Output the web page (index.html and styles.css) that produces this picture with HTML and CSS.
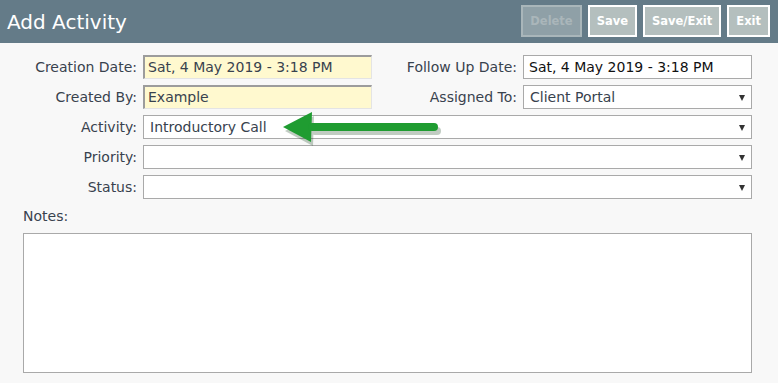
FILE: index.html
```html
<!DOCTYPE html>
<html lang="en">
<head>
    <meta charset="UTF-8">
    <title>Add Activity</title>
    <link rel="stylesheet" href="styles.css">
</head>
<body>
    <div class="page">
        <div class="header">
            <h1>Add Activity</h1>
            <div class="actions">
                <span class="btn disabled">Delete</span>
                <span class="btn">Save</span>
                <span class="btn">Save/Exit</span>
                <span class="btn">Exit</span>
            </div>
        </div>
        <div class="form">
            <label>Creation Date:</label>
            <div class="field readonly">Sat, 4 May 2019 - 3:18 PM</div>
            <label>Follow Up Date:</label>
            <div class="field dark">Sat, 4 May 2019 - 3:18 PM</div>

            <label>Created By:</label>
            <div class="field readonly">Example</div>
            <label>Assigned To:</label>
            <div class="field select">Client Portal</div>

            <label>Activity:</label>
            <div class="field select wide">Introductory Call</div>

            <label>Priority:</label>
            <div class="field select wide"></div>

            <label>Status:</label>
            <div class="field select wide"></div>
        </div>
        <div class="notes">
            <div class="notes-label">Notes:</div>
            <div class="notes-box"></div>
        </div>
        <svg class="pointer" width="170" height="44" viewBox="0 0 170 44">
            <!-- callout arrow -->
            <g transform="translate(1 3)" fill="#0b3a12" opacity="0.25">
                <polygon points="2,17 31,2 30,32"/>
                <rect x="28" y="13" width="130" height="8" rx="4"/>
            </g>
            <g fill="#1f9c31">
                <polygon points="1,16 30,1 29,31"/>
                <rect x="26" y="12" width="130" height="8" rx="4"/>
            </g>
        </svg>
    </div>
</body>
</html>
```

FILE: styles.css
```css
* {
    box-sizing: border-box;
}
body {
    margin: 0;
    background: #f8f8f8;
    font-family: "DejaVu Sans", Verdana, sans-serif;
    color: #38424e;
}
.page {
    position: relative;
    width: 778px;
    height: 383px;
    overflow: hidden;
}
.header {
    display: flex;
    align-items: center;
    justify-content: space-between;
    height: 43px;
    padding: 0 8px 0 7px;
    background: #647b88;
}
.header h1 {
    margin: 0;
    font-size: 20px;
    font-weight: normal;
    color: #fff;
}
.actions {
    display: flex;
    gap: 6px;
    margin-top: -1px;
}
.btn {
    display: inline-block;
    height: 32px;
    line-height: 28px;
    padding: 0 7px;
    border: 2px solid #fff;
    background: #b4bfbe;
    color: #fff;
    font-size: 11.5px;
    font-weight: bold;
}
.btn.disabled {
    border-color: #a9b6ba;
    background: #8fa0a7;
    color: #aab6ba;
}
.form {
    display: grid;
    grid-template-columns: 120px 229px 151px 229px;
    grid-auto-rows: 24px;
    row-gap: 6px;
    margin: 12px 0 0 23px;
}
.form label {
    align-self: center;
    text-align: right;
    font-size: 14px;
    padding-right: 6px;
}
.field {
    height: 24px;
    line-height: 22px;
    padding: 0 5px;
    border: 1px solid #a9a9a9;
    background: #fff;
    font-size: 14px;
    color: #38424e;
    white-space: nowrap;
}
.field.readonly {
    background: #fff9cf;
    border-color: #9c9c9c #e4e4e4 #e4e4e4 #9c9c9c;
    border-width: 2px 1px 1px 2px;
    line-height: 21px;
    padding-left: 3px;
}
.field.dark {
    color: #111;
}
.field.select {
    position: relative;
    padding-left: 6px;
}
.field.select::after {
    content: "";
    position: absolute;
    right: 6px;
    top: 9px;
    border-left: 3.5px solid transparent;
    border-right: 3.5px solid transparent;
    border-top: 6px solid #333;
}
.field.wide {
    grid-column: 2 / 5;
}
.notes {
    margin: 9px 26px 0 23px;
}
.notes-label {
    font-size: 14px;
    height: 25px;
}
.notes-box {
    height: 140px;
    border: 1px solid #a9a9a9;
    background: #fff;
}
.pointer {
    position: absolute;
    left: 282px;
    top: 111px;
}
```
